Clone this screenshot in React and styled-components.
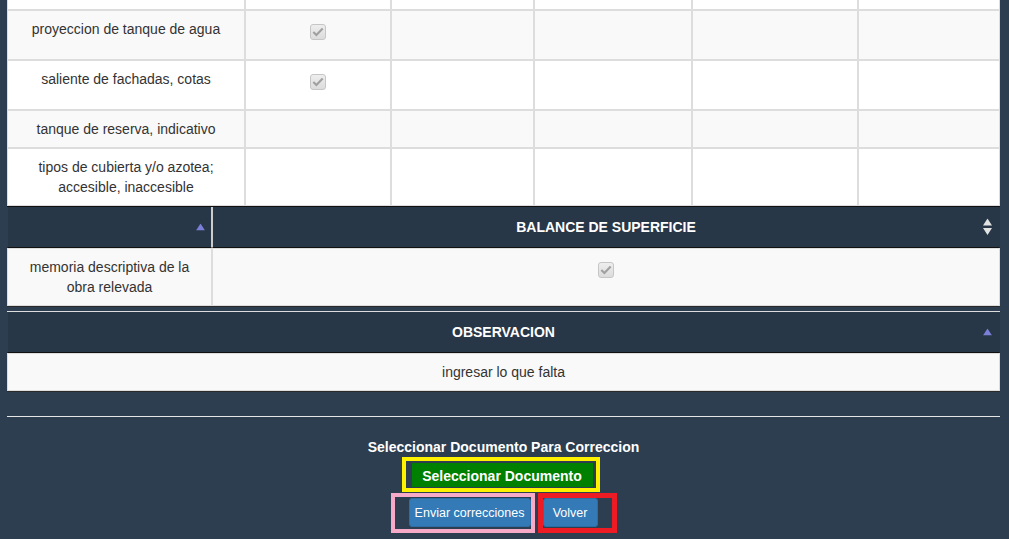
import React from "react";
import styled, { createGlobalStyle } from "styled-components";

const GlobalStyle = createGlobalStyle`
  * { box-sizing: border-box; }
  html, body {
    margin: 0;
    padding: 0;
    background: #2c3e50;
  }
  body {
    font-family: "Liberation Sans", Arial, sans-serif;
    font-size: 14px;
    line-height: 20px;
    color: #333;
  }
`;

const Page = styled.div`
  width: 1009px;
  height: 539px;
  overflow: hidden;
  padding: 0 9px 0 7px;
`;

const Grid = styled.table`
  width: 993px;
  table-layout: fixed;
  border-collapse: separate;
  border-spacing: 0;
  background: #fff;
  border-bottom: 1px solid ${(p) => p.$bottom || "#111"};
  margin-top: ${(p) => p.$top || 0}px;
  border-top: ${(p) => (p.$lightTop ? "1px solid #ddd" : "none")};

  tbody tr:nth-child(even) td {
    background: #f9f9f9;
  }
`;

const Row = styled.tr`
  height: ${(p) => p.$h}px;
`;

const Cell = styled.td`
  border: 1px solid #ddd;
  border-top: ${(p) => (p.$noTop ? "none" : "1px solid #ddd")};
  padding: ${(p) => (p.$flat ? 0 : "8px")};
  text-align: center;
  vertical-align: top;
  background: ${(p) => (p.$shade ? "#f9f9f9" : "#fff")};
`;

const Head = styled.th`
  position: relative;
  background: #283747;
  color: #fff;
  font-weight: bold;
  text-align: center;
  padding: 10px 18px;
  border-bottom: 1px solid #111;
  border-left: 1px solid ${(p) => (p.$divLeft ? "#ccc" : "#2c3e50")};
  border-right: 1px solid ${(p) => (p.$divRight ? "#ccc" : "#283747")};
`;

const SortMark = styled.svg`
  position: absolute;
  right: ${(p) => p.$right}px;
  top: 50%;
  transform: translateY(-50%);
`;

const Check = styled.span`
  display: inline-flex;
  align-items: center;
  justify-content: center;
  width: 16px;
  height: 16px;
  margin-top: 5px;
  border: 1px solid #c6c6c6;
  border-radius: 3px;
  background: linear-gradient(#eeeeee, #dcdcdc);
`;

const Footer = styled.div`
  display: flex;
  flex-direction: column;
  align-items: center;
`;

const Rule = styled.hr`
  align-self: stretch;
  margin: 24px 0 20px;
  border: 0;
  border-top: 1px solid #e6e6e6;
`;

const Caption = styled.div`
  color: #fff;
  font-weight: bold;
  font-size: 14px;
  line-height: 20px;
`;

const YellowFrame = styled.div`
  display: flex;
  border: 4px solid #fff200;
  padding: 2px 3px 1px 6px;
  margin-right: 6px;
`;

const GreenButton = styled.span`
  width: 181px;
  background: #008000;
  color: #fff;
  font-weight: bold;
  font-size: 14px;
  line-height: 20px;
  padding: 3px 0 1px;
  text-align: center;
`;

const ButtonRow = styled.div`
  display: flex;
  gap: 3px;
  margin-top: 1px;
`;

const Frame = styled.div`
  display: flex;
  border: ${(p) => p.$bw}px solid ${(p) => p.$color};
  padding: ${(p) => p.$pad};
`;

const BlueButton = styled.button`
  width: ${(p) => p.$w}px;
  height: 29px;
  padding: 0;
  background: #337ab7;
  border: 1px solid #2e6da4;
  border-radius: 3px;
  color: #fff;
  font-family: "Liberation Sans", Arial, sans-serif;
  font-size: 12.5px;
`;

function CheckBox() {
  return (
    <Check>
      <svg width="12" height="10" viewBox="0 0 12 10">
        <path d="M1.3 5 L4.4 8 L10.7 1.6" fill="none" stroke="#a0a0a0" strokeWidth="2.1" />
      </svg>
    </Check>
  );
}

function AscIcon({ right }) {
  return (
    <SortMark $right={right} width="9" height="7" viewBox="0 0 9 7">
      <path d="M4.5 0 L9 7 L0 7 Z" fill="#7b7fd8" />
    </SortMark>
  );
}

function BothIcon({ right }) {
  return (
    <SortMark $right={right} width="9" height="17" viewBox="0 0 9 17">
      <path d="M4.5 0 L9 7 L0 7 Z M0 9.5 L9 9.5 L4.5 16.5 Z" fill="#e2e2e2" />
    </SortMark>
  );
}

const widths = [238, 146, 143, 158, 166, 142];

const rows = [
  { label: "proyeccion de tanque de agua", checked: true, h: 50 },
  { label: "saliente de fachadas, cotas", checked: true, h: 50 },
  { label: "tanque de reserva, indicativo", checked: false, h: 38 },
  { label: "tipos de cubierta y/o azotea;\naccesible, inaccesible", checked: false, h: 58 },
];

function Label({ text }) {
  return text.split("\n").map((t, i) => <div key={i}>{t}</div>);
}

export default function App() {
  return (
    <Page>
      <GlobalStyle />
      <Grid>
        <colgroup>
          {widths.map((w, i) => (
            <col key={i} style={{ width: w }} />
          ))}
        </colgroup>
        <tbody>
          <Row $h={10}>
            {widths.map((w, i) => (
              <Cell key={i} $noTop $flat />
            ))}
          </Row>
          {rows.map((r) => (
            <Row key={r.label} $h={r.h}>
              <Cell>
                <Label text={r.label} />
              </Cell>
              <Cell>{r.checked && <CheckBox />}</Cell>
              <Cell />
              <Cell />
              <Cell />
              <Cell />
            </Row>
          ))}
        </tbody>
      </Grid>

      <Grid $bottom="#2a2a2a">
        <colgroup>
          <col style={{ width: 205 }} />
          <col style={{ width: 788 }} />
        </colgroup>
        <thead>
          <tr>
            <Head $divRight>
              &nbsp;
              <AscIcon right={6} />
            </Head>
            <Head $divLeft>
              BALANCE DE SUPERFICIE
              <BothIcon right={7} />
            </Head>
          </tr>
        </thead>
        <tbody>
          <Row $h={58}>
            <Cell $shade>
              <Label text={"memoria descriptiva de la\nobra relevada"} />
            </Cell>
            <Cell $shade>
              <CheckBox />
            </Cell>
          </Row>
        </tbody>
      </Grid>

      <Grid $top={4} $lightTop $bottom="#2a2a2a">
        <thead>
          <tr>
            <Head>
              OBSERVACION
              <AscIcon right={7} />
            </Head>
          </tr>
        </thead>
        <tbody>
          <Row $h={37}>
            <Cell $shade>ingresar lo que falta</Cell>
          </Row>
        </tbody>
      </Grid>

      <Footer>
        <Rule />
        <Caption>Seleccionar Documento Para Correccion</Caption>
        <YellowFrame>
          <GreenButton>Seleccionar Documento</GreenButton>
        </YellowFrame>
        <ButtonRow>
          <Frame $bw={4} $color="#f7aac8" $pad="1px 0 1px 14px">
            <BlueButton $w={122}>Enviar correcciones</BlueButton>
          </Frame>
          <Frame $bw={5} $color="#ed1c24" $pad="0 14px 1px 0">
            <BlueButton $w={55}>Volver</BlueButton>
          </Frame>
        </ButtonRow>
      </Footer>
    </Page>
  );
}
